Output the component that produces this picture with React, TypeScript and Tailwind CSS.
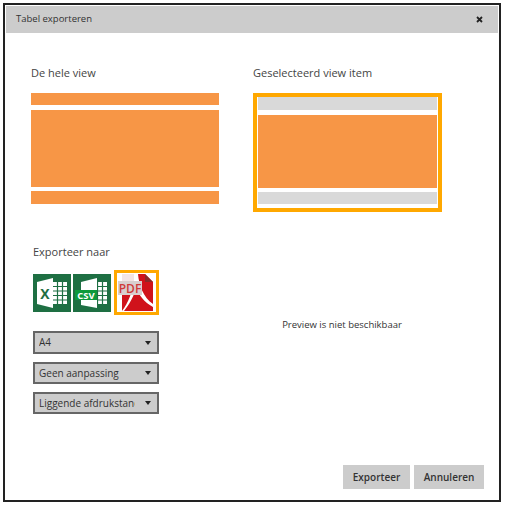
const font = { fontFamily: '"Open Sans", sans-serif' };

const SheetIcon = ({ label }: { label: string }) => {
  const csv = label === 'CSV';
  return (
    <svg width="38" height="38" viewBox="0 0 38 38" className="block">
      <rect width="38" height="38" fill="#1e6f43" />
      {/* grid sheet */}
      <rect x="20" y="8" width="14" height="22" fill="#fff" />
      <g stroke="#1e6f43" strokeWidth="1.2">
        <path d="M20 12.5H34M20 17H34M20 21.5H34M20 26H34M24.5 8V30M29.5 8V30" />
      </g>
      {/* book cover */}
      <path d={csv ? 'M8 8L24 4V34L8 31Z' : 'M4 8L20 4V34L4 30Z'} fill="#fff" />
      {csv ? (
        <>
          <rect x="2" y="16" width="22" height="10" fill="#0d9a3c" />
          <text x="13" y="24.5" textAnchor="middle" fontSize="9.5" fontWeight="700" fill="#fff" fontFamily="Open Sans, sans-serif">CSV</text>
        </>
      ) : (
        <text x="12" y="24.5" textAnchor="middle" fontSize="14" fontWeight="700" fill="#1e6f43" fontFamily="Open Sans, sans-serif">X</text>
      )}
    </svg>
  );
};

const PdfIcon = () => (
  <svg width="39" height="39" viewBox="0 0 39 39" className="block">
    <path d="M5 1H28L36 9V38H5Z" fill="#d0121b" />
    <path d="M28 1L36 9H28Z" fill="#8a2a2a" />
    <path d="M21 1C22 12 26 24 36 31V34C27 29 22 22 19 15C17 23 12 32 7 38H5C11 30 16 20 17 1Z" fill="#fff" />
    <path d="M5 1H17V8H5Z" fill="#f3e4e4" />
    <rect x="1" y="8" width="24" height="14" fill="#d9cfcf" />
    <text x="13" y="19.5" textAnchor="middle" fontSize="12" fontWeight="600" fill="#cf3a3a" fontFamily="Open Sans, sans-serif">PDF</text>
  </svg>
);

const Dropdown = ({ value, className }: { value: string; className: string }) => (
  <div className={`w-[126px] flex items-center border-2 border-[#666] bg-[#cccccc] pl-[4px] pr-[6px] ${className}`}>
    <span className="flex-1 min-w-0 overflow-hidden whitespace-nowrap text-[10px] text-[#333]">{value}</span>
    <span className="ml-[10px] w-0 h-0 border-x-[3.5px] border-x-transparent border-t-[4px] border-t-[#222]" />
  </div>
);

const Bar = ({ className }: { className: string }) => <div className={`w-full ${className}`} />;

export default function App() {
  return (
    <div className="w-[506px] h-[517px] bg-white pt-[3px] pl-[3px]" style={font}>
      <div className="w-[498px] h-[499px] border-2 border-[#222] flex flex-col bg-white">
        {/* Title bar */}
        <div className="mx-px mt-px h-[27px] shrink-0 bg-[#cccccc] flex items-center justify-between pl-[10px] pr-[15px]">
          <span className="text-[9.5px] text-[#333]">Tabel exporteren</span>
          <svg width="7" height="7" viewBox="0 0 7 7">
            <path d="M1 1L6 6M6 1L1 6" stroke="#222" strokeWidth="1.8" />
          </svg>
        </div>

        {/* View choices */}
        <div className="flex pl-[26px] pt-[32px]">
          <div className="w-[188px] mr-[34px]">
            <div className="h-[16px] leading-[16px] text-[11px] text-[#444] mb-[12px]">De hele view</div>
            <div className="flex flex-col">
              <Bar className="h-[12px] bg-[#f79646]" />
              <Bar className="h-[77px] mt-[5px] bg-[#f79646]" />
              <Bar className="h-[13px] mt-[4px] bg-[#f79646]" />
            </div>
          </div>
          <div className="w-[189px]">
            <div className="h-[16px] leading-[16px] text-[11px] text-[#444] mb-[12px]">Geselecteerd view item</div>
            <div className="h-[119px] border-[4px] border-[#ffa800] px-px flex flex-col">
              <Bar className="h-[13px] bg-[#d9d9d9]" />
              <Bar className="h-[73px] mt-[5px] bg-[#f79646]" />
              <Bar className="h-[12px] mt-[4px] bg-[#d9d9d9]" />
            </div>
          </div>
        </div>

        {/* Export options */}
        <div className="flex mt-[32px]">
          <div className="w-[250px] pl-[28px] shrink-0">
            <div className="h-[16px] leading-[16px] text-[11px] text-[#444]">Exporteer naar</div>
            <div className="flex items-center mt-[10px] h-[45px]">
              <SheetIcon label="X" />
              <div className="ml-[2px]"><SheetIcon label="CSV" /></div>
              <div className="ml-[3px] w-[45px] h-[45px] border-[3px] border-[#ffa800] flex items-center justify-center">
                <PdfIcon />
              </div>
            </div>
            <div className="mt-[16px] flex flex-col gap-[8px]">
              <Dropdown value="A4" className="h-[23px]" />
              <Dropdown value="Geen aanpassing" className="h-[22px]" />
              <Dropdown value="Liggende afdrukstand" className="h-[22px]" />
            </div>
          </div>
          <div className="w-[174px] pt-[74px] text-center text-[9.5px] text-[#333] whitespace-nowrap">
            Preview is niet beschikbaar
          </div>
        </div>

        {/* Footer */}
        <div className="mt-auto flex justify-end gap-[4px] pr-[15px] pb-[11px]">
          <button className="w-[67px] h-[24px] bg-[#cccccc] text-[10px] font-semibold text-[#333]">Exporteer</button>
          <button className="w-[70px] h-[24px] bg-[#cccccc] text-[10px] font-semibold text-[#333]">Annuleren</button>
        </div>
      </div>
    </div>
  );
}
